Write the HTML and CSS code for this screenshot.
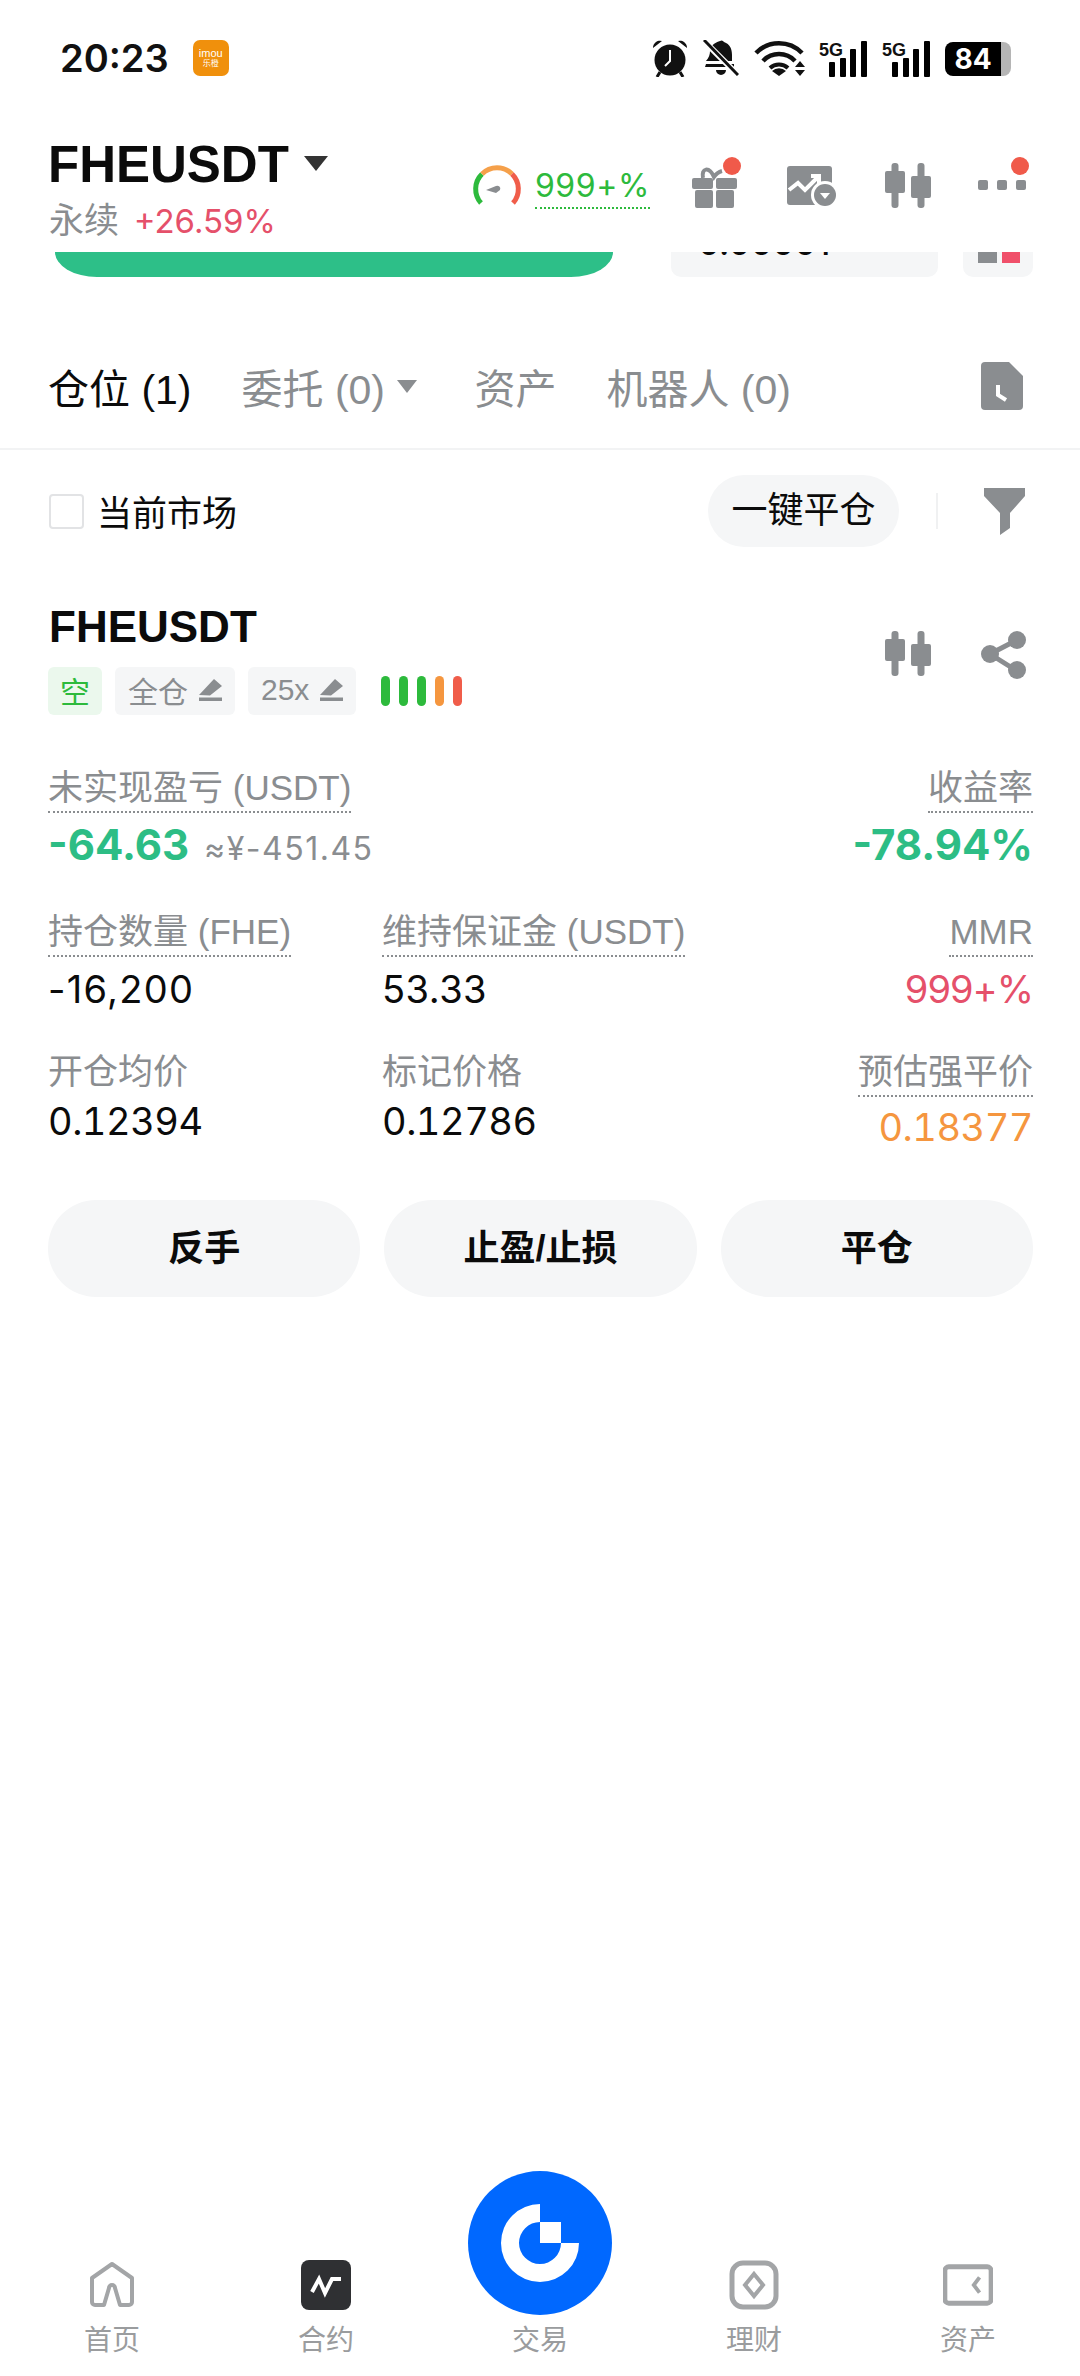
FILE: index.html
```html
<!DOCTYPE html>
<html lang="zh-CN">
<head>
    <meta charset="UTF-8">
    <meta name="viewport" content="width=device-width, initial-scale=1.0">
    <title>FHEUSDT</title>
    <link rel="stylesheet" href="styles.css">
</head>
<body>
    <div class="status-bar">
        <span class="clock">20:23</span>
        <span class="app-badge"><span>imou</span><span class="app-badge-sub">乐橙</span></span>
        <div class="status-icons">
            <svg class="st-alarm" viewBox="0 0 36 38">
                <circle cx="18" cy="21" r="15.5" fill="#111"/>
                <path d="M1 9 A7 7 0 0 1 10 2 Z M35 9 A7 7 0 0 0 26 2 Z" fill="#111"/>
                <path d="M8 33 L5 38 M28 33 L31 38" stroke="#111" stroke-width="3"/>
                <path d="M18 11 V22 L13 27" fill="none" stroke="#fff" stroke-width="2"/>
            </svg>
            <svg class="st-bell" viewBox="0 0 36 36">
                <path d="M17 1 a3 3 0 0 1 4 1 C27 4 29 9 29 15 V21 L3 21 C6 18 7 14 7 11 C7 6 11 3 17 1 Z M3 24 H31 V27 H2 Z M13 30 H23 A5 5 0 0 1 13 30 Z" fill="#111"/>
                <path d="M1 1 L35 35" stroke="#fff" stroke-width="6"/>
                <path d="M1 0 L35 35" stroke="#111" stroke-width="3"/>
            </svg>
            <svg class="st-wifi" viewBox="0 0 50 37">
                <g fill="none" stroke="#111" stroke-width="4.5">
                    <path d="M2 13 A32 32 0 0 1 48 13"/>
                    <path d="M9 21 A22 22 0 0 1 41 21"/>
                </g>
                <path d="M16 28 A13 13 0 0 1 34 28" fill="none" stroke="#111" stroke-width="4"/>
                <path d="M25 36 L18 31 A10 10 0 0 1 32 31 Z" fill="#111"/>
                <path d="M46 21 L51 27 H41 Z M41 30 H51 L46 36 Z" fill="#111"/>
            </svg>
            <svg class="st-signal" viewBox="0 0 48 37">
                <text x="0" y="16" class="st-5g">5G</text>
                <rect x="10" y="22" width="6" height="15" rx="1"/>
                <rect x="21" y="18" width="6" height="19" rx="1"/>
                <rect x="31" y="9" width="6" height="28" rx="1"/>
                <rect x="42" y="1" width="6" height="36" rx="1"/>
            </svg>
            <svg class="st-signal" viewBox="0 0 48 37">
                <text x="0" y="16" class="st-5g">5G</text>
                <rect x="10" y="22" width="6" height="15" rx="1"/>
                <rect x="21" y="18" width="6" height="19" rx="1"/>
                <rect x="31" y="9" width="6" height="28" rx="1"/>
                <rect x="42" y="1" width="6" height="36" rx="1"/>
            </svg>
            <div class="battery"><span class="battery-level">84</span><span class="battery-tail"></span></div>
        </div>
    </div>

    <div class="top-header">
        <div class="pair-block">
            <div class="pair-title">FHEUSDT<span class="caret-big"></span></div>
            <div class="pair-sub">永续 <span class="pair-change">+26.59%</span></div>
        </div>
        <div class="header-tools">
            <div class="risk-gauge">
                <svg class="gauge" viewBox="0 0 50 44">
                    <g fill="none" stroke-width="5">
                        <path d="M9 38 A21 21 0 0 1 10 9" stroke="#2dba3c"/>
                        <path d="M10 9 A21 21 0 0 1 40 9" stroke="#f5a04a"/>
                        <path d="M40 9 A21 21 0 0 1 41 38" stroke="#f05d4a"/>
                    </g>
                    <path d="M14 25 L24 21 A3 3 0 0 1 28 25 L24 28 Z" fill="#8a8d90"/>
                </svg>
                <span class="risk-value">999+%</span>
            </div>
            <div class="tool-icons">
                <svg class="tool-icon" viewBox="0 0 52 52">
                    <g fill="#8a8d90">
                        <rect x="0" y="18" width="21" height="11" rx="2"/>
                        <rect x="24" y="18" width="21" height="11" rx="2"/>
                        <rect x="3" y="30" width="18" height="18" rx="2"/>
                        <rect x="24" y="30" width="18" height="18" rx="2"/>
                    </g>
                    <path d="M11 18 C9 8 17 6 22 17 C24 14 26 12 30 11" fill="none" stroke="#8a8d90" stroke-width="4"/>
                    <circle cx="40" cy="6" r="9" fill="#f05a4a"/>
                </svg>
                <svg class="tool-icon" viewBox="0 0 52 52">
                    <rect x="0" y="6" width="45" height="39" rx="3" fill="#8a8d90"/>
                    <path d="M2 30 L11 23 L18 30 L31 17 M24 16 H32 V24" fill="none" stroke="#fff" stroke-width="4"/>
                    <circle cx="38" cy="35" r="14" fill="#fff"/>
                    <circle cx="38" cy="35" r="11" fill="#8a8d90"/>
                    <path d="M33 33 H43 L38 39 Z" fill="#fff"/>
                </svg>
                <svg class="tool-icon" viewBox="0 0 52 52">
                    <g fill="#8a8d90">
                        <rect x="9.5" y="3" width="7" height="45" rx="3"/>
                        <rect x="3" y="11" width="20" height="22" rx="2"/>
                        <rect x="35.5" y="3" width="7" height="45" rx="3"/>
                        <rect x="29" y="16" width="20" height="22" rx="2"/>
                    </g>
                </svg>
                <svg class="tool-icon" viewBox="0 0 52 52">
                    <g fill="#8a8d90">
                        <rect x="1" y="20" width="10" height="10" rx="2"/>
                        <rect x="20" y="20" width="10" height="10" rx="2"/>
                        <rect x="39" y="20" width="10" height="10" rx="2"/>
                    </g>
                    <circle cx="43" cy="6" r="9" fill="#f05a4a"/>
                </svg>
            </div>
        </div>
    </div>

    <div class="chart-strip">
        <div class="strip-green"></div>
        <div class="strip-box"><span class="strip-num">0.00001</span></div>
        <div class="strip-mini"><span class="mini-grey"></span><span class="mini-red"></span></div>
    </div>

    <div class="tabs">
        <span class="tab tab-active">仓位 (1)</span>
        <span class="tab tab-orders">委托 (0) <span class="caret-small"></span></span>
        <span class="tab tab-assets">资产</span>
        <span class="tab tab-bots">机器人 (0)</span>
        <svg class="doc-icon" viewBox="0 0 42 48">
            <path d="M4 0 H28 L42 14 V44 A4 4 0 0 1 38 48 H4 A4 4 0 0 1 0 44 V4 A4 4 0 0 1 4 0 Z" fill="#8a8d90"/>
            <path d="M17 23 V33 L25 38" fill="none" stroke="#fff" stroke-width="4"/>
        </svg>
    </div>

    <div class="filter-row">
        <span class="checkbox"></span>
        <span class="filter-label">当前市场</span>
        <span class="close-all">一键平仓</span>
        <span class="filter-sep"></span>
        <svg class="filter-icon" viewBox="0 0 41 47">
            <path d="M0 0 H41 V8 L26 25 V40 L16 47 V25 L0 8 Z" fill="#8a8d90"/>
        </svg>
    </div>

    <div class="position-card">
        <div class="card-head">
            <div>
                <div class="card-title">FHEUSDT</div>
                <div class="tags">
                    <span class="tag tag-short">空</span>
                    <span class="tag">全仓
                        <svg class="pencil" viewBox="0 0 23 22"><path d="M0 16 L15 0 L23 7 L11 16.5 Z M0 18.5 H23 V22 H0 Z" fill="#8a8d90"/></svg>
                    </span>
                    <span class="tag">25x
                        <svg class="pencil" viewBox="0 0 23 22"><path d="M0 16 L15 0 L23 7 L11 16.5 Z M0 18.5 H23 V22 H0 Z" fill="#8a8d90"/></svg>
                    </span>
                    <div class="adl-bars">
                        <span class="adl-green"></span>
                        <span class="adl-green"></span>
                        <span class="adl-green"></span>
                        <span class="adl-orange"></span>
                        <span class="adl-red"></span>
                    </div>
                </div>
            </div>
            <div class="card-actions">
                <svg class="candle-sm" viewBox="0 0 46 45">
                    <g fill="#8a8d90">
                        <rect x="6.5" y="0" width="7" height="45" rx="3"/>
                        <rect x="0" y="8" width="20" height="22" rx="2"/>
                        <rect x="32.5" y="0" width="7" height="45" rx="3"/>
                        <rect x="26" y="13" width="20" height="22" rx="2"/>
                    </g>
                </svg>
                <svg class="share-icon" viewBox="0 0 46 48">
                    <path d="M36 9 L9 23 L36 40" fill="none" stroke="#8a8d90" stroke-width="5"/>
                    <circle cx="9" cy="23" r="9" fill="#8a8d90"/>
                    <circle cx="36" cy="9" r="9" fill="#8a8d90"/>
                    <circle cx="36" cy="39" r="9" fill="#8a8d90"/>
                </svg>
            </div>
        </div>

        <div class="stat-row stat-row-1">
            <div class="stat stat-col1">
                <span class="stat-label">未实现盈亏 (USDT)</span>
                <div class="pnl-line"><span class="pnl-value">-64.63</span><span class="pnl-cny">≈¥-451.45</span></div>
            </div>
            <div class="stat stat-right">
                <span class="stat-label">收益率</span>
                <div class="pnl-value pnl-rate">-78.94%</div>
            </div>
        </div>

        <div class="stat-row stat-row-2">
            <div class="stat stat-col1">
                <span class="stat-label">持仓数量 (FHE)</span>
                <div class="stat-value val-qty">-16,200</div>
            </div>
            <div class="stat stat-col2">
                <span class="stat-label">维持保证金 (USDT)</span>
                <div class="stat-value">53.33</div>
            </div>
            <div class="stat stat-right">
                <span class="stat-label">MMR</span>
                <div class="stat-value val-red">999+%</div>
            </div>
        </div>

        <div class="stat-row stat-row-3">
            <div class="stat stat-col1">
                <span class="stat-label stat-plain">开仓均价</span>
                <div class="stat-value val-price">0.12394</div>
            </div>
            <div class="stat stat-col2">
                <span class="stat-label stat-plain">标记价格</span>
                <div class="stat-value val-price">0.12786</div>
            </div>
            <div class="stat stat-right">
                <span class="stat-label">预估强平价</span>
                <div class="stat-value val-price val-orange">0.18377</div>
            </div>
        </div>

        <div class="card-buttons">
            <span class="card-btn">反手</span>
            <span class="card-btn">止盈/止损</span>
            <span class="card-btn">平仓</span>
        </div>
    </div>

    <div class="bottom-nav">
        <div class="nav-item">
            <svg class="nav-icon" viewBox="0 0 50 50">
                <path d="M25 4 L45 18 V42 A3 3 0 0 1 42 45 H33 L28 28 A3 3 0 0 0 22 28 L17 45 H8 A3 3 0 0 1 5 42 V18 Z" fill="none" stroke="#a3a5a7" stroke-width="4" stroke-linejoin="round"/>
            </svg>
            <span class="nav-label">首页</span>
        </div>
        <div class="nav-item">
            <svg class="nav-icon" viewBox="0 0 50 50">
                <rect width="50" height="50" rx="8" fill="#2f3033"/>
                <path d="M11 32 L18 19 L24 33 L31 19 H40" fill="none" stroke="#fff" stroke-width="4"/>
            </svg>
            <span class="nav-label">合约</span>
        </div>
        <div class="nav-item">
            <svg class="nav-trade" viewBox="0 0 144 144">
                <circle cx="72" cy="72" r="72" fill="#0068ff"/>
                <path d="M72 33 A39 39 0 1 0 111 72 H93 A21 21 0 1 1 72 51 Z" fill="#fff"/>
                <rect x="72" y="51" width="21" height="21" fill="#fff"/>
            </svg>
            <span class="nav-label">交易</span>
        </div>
        <div class="nav-item">
            <svg class="nav-icon" viewBox="0 0 50 50">
                <rect x="3" y="3" width="44" height="44" rx="11" fill="none" stroke="#a3a5a7" stroke-width="5"/>
                <path d="M25 14 L34 25 L25 36 L16 25 Z" fill="none" stroke="#a3a5a7" stroke-width="4"/>
            </svg>
            <span class="nav-label">理财</span>
        </div>
        <div class="nav-item">
            <svg class="nav-icon" viewBox="0 0 52 50">
                <rect x="2" y="6" width="48" height="38" rx="4" fill="none" stroke="#a3a5a7" stroke-width="5"/>
                <path d="M38 17 L32 25 L38 33" fill="none" stroke="#a3a5a7" stroke-width="4"/>
            </svg>
            <span class="nav-label">资产</span>
        </div>
    </div>
</body>
</html>
```

FILE: styles.css
```css
* {
    box-sizing: border-box;
}
body {
    margin: 0;
    width: 1080px;
    height: 2376px;
    display: flex;
    flex-direction: column;
    background-color: #fff;
    color: #0b0b0b;
    font-family: "Liberation Sans", "Noto Sans CJK SC", sans-serif;
    overflow: hidden;
}

/* status bar */
.status-bar {
    height: 116px;
    display: flex;
    align-items: center;
    padding: 0 69px 0 60px;
}
.clock {
    font-family: Inter, sans-serif;
    font-size: 38px;
    font-weight: 600;
    color: #111;
}
.app-badge {
    width: 36px;
    height: 36px;
    margin-left: 24px;
    border-radius: 7px;
    background-color: #f0900c;
    color: #fff;
    font-size: 11px;
    line-height: 11px;
    display: flex;
    flex-direction: column;
    align-items: center;
    justify-content: center;
}
.app-badge-sub {
    font-size: 8px;
    line-height: 9px;
}
.status-icons {
    margin-left: auto;
    display: flex;
    align-items: center;
    gap: 15px;
}
.st-alarm {
    width: 36px;
    height: 38px;
}
.st-bell {
    width: 36px;
    height: 36px;
}
.st-wifi {
    width: 50px;
    height: 37px;
    overflow: visible;
}
.st-signal {
    width: 48px;
    height: 37px;
}
.st-5g {
    font-family: "Liberation Sans", sans-serif;
    font-size: 18px;
    font-weight: 700;
    fill: #111;
}
.battery {
    width: 66px;
    height: 34px;
    margin-top: 2px;
    display: flex;
}
.battery-level {
    width: 56px;
    background-color: #000;
    color: #fff;
    border-radius: 8px 0 0 8px;
    font-family: Inter, sans-serif;
    font-size: 28px;
    font-weight: 700;
    line-height: 34px;
    text-align: center;
}
.battery-tail {
    width: 10px;
    background-color: #b5b5b5;
    border-radius: 0 8px 8px 0;
    margin: 0;
}

/* pair header */
.top-header {
    height: 136px;
    display: flex;
    padding: 0 51px 0 48px;
}
.pair-title {
    margin-top: 24px;
    font-size: 51px;
    font-weight: 700;
    line-height: 50px;
    display: flex;
    align-items: center;
    gap: 15px;
}
.caret-big {
    width: 0;
    height: 0;
    margin-top: -3px;
    border-left: 12px solid transparent;
    border-right: 12px solid transparent;
    border-top: 15px solid #333;
}
.pair-sub {
    margin-top: 6px;
    margin-left: 1px;
    font-size: 35px;
    line-height: 50px;
    color: #8a8d90;
}
.pair-change {
    margin-left: 5px;
    font-family: Inter, sans-serif;
    font-size: 33px;
    color: #e5506a;
}
.header-tools {
    margin-left: auto;
    display: flex;
    align-items: flex-start;
}
.risk-gauge {
    margin-top: 49px;
    display: flex;
    align-items: flex-start;
    gap: 13px;
}
.gauge {
    width: 50px;
    height: 44px;
}
.risk-value {
    font-family: Inter, sans-serif;
    font-size: 32px;
    line-height: 38px;
    letter-spacing: 0.6px;
    color: #2dba3c;
    padding-top: 2px;
    padding-bottom: 2px;
    border-bottom: 2px dotted #2dba3c;
}
.tool-icons {
    margin-left: 42px;
    margin-top: 44px;
    display: flex;
    gap: 43px;
}
.tool-icon {
    width: 52px;
    height: 52px;
    overflow: visible;
}

/* bit of the chart scrolled under the header */
.chart-strip {
    height: 25px;
    display: flex;
    padding-left: 55px;
    overflow: hidden;
}
.strip-green {
    width: 558px;
    background-color: #2dbf88;
    border-radius: 0 0 42px 42px / 0 0 25px 25px;
}
.strip-box {
    width: 267px;
    margin-left: 58px;
    background-color: #f5f6f7;
    border-radius: 0 0 10px 10px;
    padding-left: 27px;
    overflow: hidden;
}
.strip-num {
    display: block;
    margin-top: -29px;
    font-family: Inter, sans-serif;
    font-size: 34px;
    line-height: 40px;
    font-weight: 500;
}
.strip-mini {
    width: 70px;
    margin-left: 25px;
    background-color: #f5f6f7;
    border-radius: 0 0 10px 10px;
    padding-left: 15px;
    display: flex;
    align-items: flex-start;
    gap: 5px;
}
.mini-grey {
    width: 19px;
    height: 11px;
    background-color: #8a8d90;
}
.mini-red {
    width: 18px;
    height: 11px;
    background-color: #f0506a;
}

/* tabs */
.tabs {
    height: 120px;
    margin-top: 53px;
    padding: 0 57px 6px 48px;
    display: flex;
    align-items: center;
    border-bottom: 2px solid #f2f3f4;
}
.tab {
    font-size: 41px;
    color: #8a8d90;
    white-space: nowrap;
}
.tab-active {
    color: #0b0b0b;
}
.tab-orders {
    margin-left: 50px;
    display: flex;
    align-items: center;
    white-space: pre;
}
.caret-small {
    width: 0;
    height: 0;
    margin-left: 1px;
    border-left: 10px solid transparent;
    border-right: 10px solid transparent;
    border-top: 13px solid #8a8d90;
}
.tab-assets {
    margin-left: 57px;
}
.tab-bots {
    margin-left: 50px;
}
.doc-icon {
    width: 42px;
    height: 48px;
    margin-left: auto;
}

/* filter row */
.filter-row {
    margin-top: 25px;
    height: 72px;
    padding: 0 55px 0 49px;
    display: flex;
    align-items: center;
}
.checkbox {
    width: 35px;
    height: 35px;
    border: 2px solid #e2e3e5;
    border-radius: 4px;
}
.filter-label {
    margin-left: 13px;
    padding-bottom: 2px;
    font-size: 35px;
}
.close-all {
    margin-left: auto;
    width: 191px;
    height: 72px;
    border-radius: 36px;
    background-color: #f5f6f7;
    font-size: 36px;
    line-height: 72px;
    text-align: center;
}
.filter-sep {
    width: 2px;
    height: 36px;
    margin-left: 37px;
    background-color: #f0f1f2;
}
.filter-icon {
    width: 41px;
    height: 47px;
    margin-left: 46px;
}

/* position card */
.position-card {
    margin-top: 55px;
    padding: 0 47px 0 48px;
}
.card-head {
    display: flex;
    justify-content: space-between;
}
.card-title {
    font-size: 44px;
    font-weight: 700;
    line-height: 50px;
    margin-left: 1px;
}
.tags {
    margin-top: 15px;
    display: flex;
    align-items: center;
    gap: 13px;
}
.tag {
    height: 48px;
    padding: 0 13px 2px;
    border-radius: 6px;
    background-color: #f5f6f7;
    color: #8a8d90;
    font-size: 30px;
    display: flex;
    align-items: center;
    gap: 11px;
}
.tag-short {
    padding: 0 12px 2px;
    background-color: #ebf8ed;
    color: #2dba3c;
}
.pencil {
    width: 23px;
    height: 22px;
}
.adl-bars {
    margin-left: 12px;
    display: flex;
    gap: 9px;
}
.adl-bars span {
    width: 9px;
    height: 30px;
    border-radius: 5px;
}
.adl-green {
    background-color: #2dba3c;
}
.adl-orange {
    background-color: #f5963f;
}
.adl-red {
    background-color: #f05d4a;
}
.card-actions {
    margin-top: 29px;
    margin-right: 6px;
    display: flex;
    align-items: flex-start;
    gap: 50px;
}
.candle-sm {
    width: 46px;
    height: 45px;
}
.share-icon {
    width: 46px;
    height: 48px;
}

/* stats */
.stat-row {
    display: flex;
    justify-content: space-between;
}
.stat-row-1 {
    margin-top: 53px;
}
.stat-row-2 {
    margin-top: 42px;
}
.stat-row-3 {
    margin-top: 38px;
}
.stat {
    display: flex;
    flex-direction: column;
    align-items: flex-start;
}
.stat-col1 {
    width: 334px;
}
.stat-col2 {
    margin-right: auto;
}
.stat-right {
    align-items: flex-end;
}
.stat-label {
    font-size: 35px;
    line-height: 40px;
    color: #8a8d90;
    padding-bottom: 3px;
    border-bottom: 2px dotted #8a8d90;
    white-space: nowrap;
}
.stat-plain {
    padding-bottom: 0;
    border-bottom: none;
}
.pnl-line {
    margin-top: 7px;
    display: flex;
    align-items: baseline;
    white-space: nowrap;
}
.pnl-value {
    font-family: Inter, sans-serif;
    font-size: 42px;
    font-weight: 700;
    line-height: 50px;
    color: #2dbd85;
}
.pnl-rate {
    margin-top: 7px;
}
.pnl-cny {
    margin-left: 15px;
    font-family: Inter, sans-serif;
    font-size: 32px;
    letter-spacing: 1.5px;
    color: #8a8d90;
}
.stat-value {
    margin-top: 7px;
    font-family: Inter, sans-serif;
    font-size: 38px;
    line-height: 50px;
    letter-spacing: 0.5px;
}
.stat-plain + .stat-value {
    margin-top: 4px;
}
.stat-row-3 .stat-right .stat-value {
    margin-top: 5px;
}
.val-qty {
    letter-spacing: 1.3px;
}
.val-price {
    font-variant-numeric: tabular-nums;
    letter-spacing: -0.5px;
}
.val-red {
    color: #e5506a;
    letter-spacing: -1px;
}
.val-orange {
    color: #f5963f;
}
.card-buttons {
    margin-top: 48px;
    display: flex;
    gap: 24px;
}
.card-btn {
    flex: 1;
    height: 97px;
    border-radius: 48px;
    background-color: #f5f6f7;
    font-size: 36px;
    font-weight: 700;
    line-height: 97px;
    text-align: center;
}

/* bottom nav */
.bottom-nav {
    margin-top: auto;
    padding: 0 5px 17px 5px;
    display: flex;
    align-items: flex-end;
}
.nav-item {
    flex: 1;
    display: flex;
    flex-direction: column;
    align-items: center;
}
.nav-icon {
    width: 50px;
    height: 50px;
    margin-bottom: 13px;
}
.nav-trade {
    width: 144px;
    height: 144px;
    margin-bottom: 8px;
}
.nav-label {
    font-size: 28px;
    line-height: 36px;
    color: #9a9c9e;
}
```
